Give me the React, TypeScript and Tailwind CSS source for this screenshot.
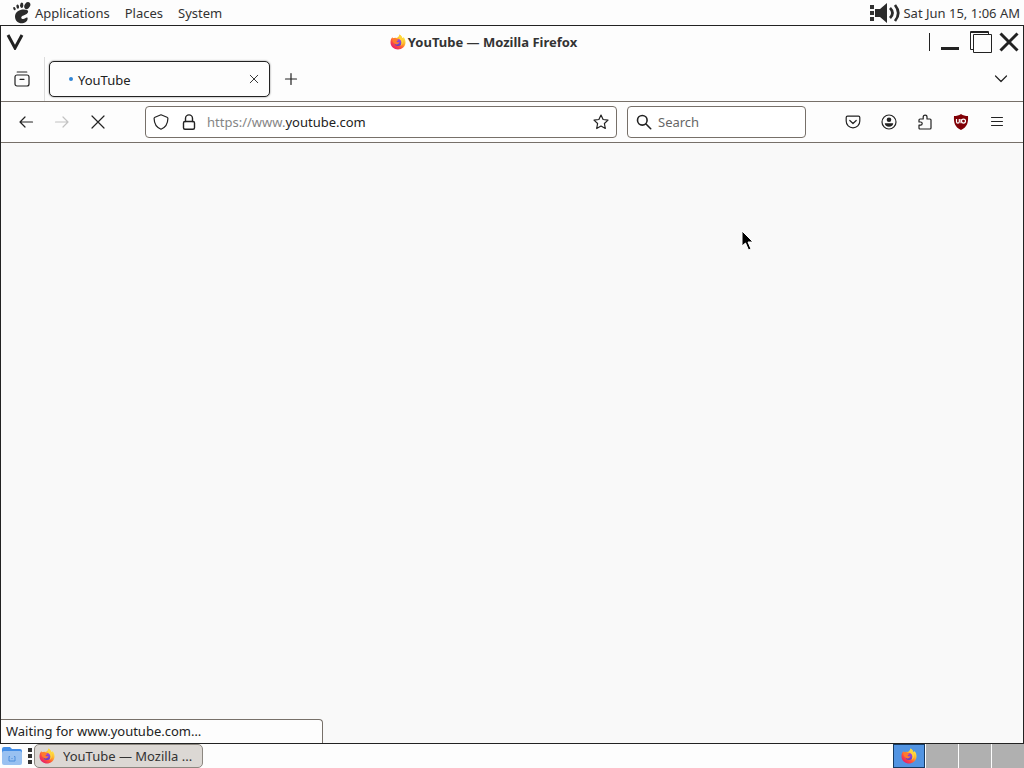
import type { ReactNode } from "react";

function Icon({ children, className = "size-4" }: { children: ReactNode; className?: string }) {
  return (
    <svg
      viewBox="0 0 16 16"
      className={`${className} shrink-0`}
      fill="none"
      stroke="currentColor"
      strokeWidth="1.2"
      strokeLinecap="round"
      strokeLinejoin="round"
      aria-hidden="true"
    >
      {children}
    </svg>
  );
}

function FirefoxLogo({ id, className }: { id: string; className: string }) {
  return (
    <svg viewBox="0 0 32 32" className={`${className} shrink-0`} aria-hidden="true">
      <defs>
        <linearGradient id={`${id}-flame`} x1="0.85" y1="0.1" x2="0.2" y2="0.9">
          <stop offset="0" stopColor="#fff04a" />
          <stop offset="0.35" stopColor="#ffb42c" />
          <stop offset="0.65" stopColor="#ff5a36" />
          <stop offset="1" stopColor="#e8206a" />
        </linearGradient>
        <linearGradient id={`${id}-globe`} x1="0.7" y1="0" x2="0.3" y2="1">
          <stop offset="0" stopColor="#a544e0" />
          <stop offset="1" stopColor="#5a3fc4" />
        </linearGradient>
      </defs>
      <path
        d="M19 1c4 2 5 5 6 7 1 0 2-1 2-2 3 3 4 7 4 11 0 8-7 14-15 14S1 25 1 17c0-4 1-8 4-11 0 1 0 2 1 3 2-1 4-2 6-1 3 0 6-3 7-7z"
        fill={`url(#${id}-flame)`}
      />
      <circle cx="16" cy="17" r="7" fill={`url(#${id}-globe)`} />
      <path d="M5 9c3-2 6-1 8 1l4 1c0 2-3 2-4 4 1 2 4 2 6 1-1 4-5 6-9 4-4-2-6-6-5-11z" fill="#ff7a2e" />
      <path d="M19 1c4 3 7 8 7 14 0 4-2 7-5 9 3-5 3-10-1-13-3-2-3-6-1-10z" fill="#ffd43b" />
    </svg>
  );
}

function GnomeFoot() {
  return (
    <svg viewBox="0 0 20 24" className="h-6 w-5 shrink-0 fill-[#2b2b2b]" aria-hidden="true">
      <ellipse cx="15.300" cy="4.600" rx="2.700" ry="3.800" transform="rotate(28 15.3 4.6)" />
      <ellipse cx="9.700" cy="4.300" rx="1.600" ry="2.700" transform="rotate(4 9.7 4.3)" />
      <ellipse cx="5.700" cy="5.600" rx="1.300" ry="2.200" transform="rotate(-10 5.7 5.6)" />
      <ellipse cx="2.400" cy="7.600" rx="1.100" ry="1.700" transform="rotate(-24 2.4 7.6)" />
      <path d="M15.500 9.300C11.500 7 3 9 3 15.500c0 4.300 3.500 7.300 7.500 6.800 3.500-.4 5.700-3.200 5-5.500-1.200-1.400-2.500 1.700-5 1.200-2-.7-1.500-3 1-3.600 3-.7 6-3.300 4-5.100z" />
    </svg>
  );
}

function Dots() {
  return (
    <span className="flex shrink-0 flex-col gap-[2px]" aria-hidden="true">
      <span className="size-1 bg-[#333]" />
      <span className="size-1 bg-[#333]" />
      <span className="size-1 bg-[#333]" />
    </span>
  );
}

function TopPanel() {
  return (
    <header className="flex h-[25px] shrink-0 items-center justify-between bg-[#fdfdfd] pr-1 pl-3 text-[#333]">
      <nav className="flex items-center gap-[15px]">
        <button type="button" className="flex items-center gap-[3px]">
          <GnomeFoot />
          Applications
        </button>
        <button type="button">Places</button>
        <button type="button">System</button>
      </nav>
      <div className="flex items-center">
        <Dots />
        <IconButton label="Volume" className="mr-[2px]">
          <svg viewBox="0 0 27 22" className="h-[22px] w-[27px]" aria-hidden="true">
            <path d="M1 7h5l7-6v20l-7-6H1z" fill="#2b2b2b" />
            <path d="M16 6q5 5 0 10M21 3q6.500 8 0 16" fill="none" stroke="#2b2b2b" strokeWidth="2.700" />
          </svg>
        </IconButton>
        <time>Sat Jun 15, 1:06 AM</time>
      </div>
    </header>
  );
}

function IconButton({ label, children, className = "" }: { label: string; children: ReactNode; className?: string }) {
  return (
    <button type="button" aria-label={label} className={`flex shrink-0 items-center justify-center ${className}`}>
      {children}
    </button>
  );
}

function TitleBar() {
  return (
    <div className="flex h-[31px] shrink-0 items-center justify-between pr-1 pl-[5px]">
      <IconButton label="Window menu" className="w-8 justify-start">
        <svg viewBox="0 0 18 16" className="h-4 w-[18px]" fill="none" stroke="#222" strokeWidth="3" aria-hidden="true">
          <path d="M2 1l7 13 7-13" />
        </svg>
      </IconButton>
      <h1 className="flex items-center gap-[2px] font-bold text-[#333]">
        <FirefoxLogo id="title" className="size-4" />
        YouTube — Mozilla Firefox
      </h1>
      <div className="flex items-center text-[#222]">
        <span className="h-[18px] w-px bg-[#222]" />
        <IconButton label="Minimize" className="ml-[11px]">
          <svg viewBox="0 0 18 22" className="h-[22px] w-[18px]" aria-hidden="true">
            <path d="M0 16h18v3H0z" fill="currentColor" />
          </svg>
        </IconButton>
        <IconButton label="Maximize" className="ml-[11px]">
          <svg viewBox="0 0 22 22" className="size-[22px]" fill="none" stroke="currentColor" aria-hidden="true">
            <path d="M.5.5h18v18H.5zM.5 1.500h18" />
            <path d="M3.500 3.500h18v18h-18z" fill="#fdfdfd" />
          </svg>
        </IconButton>
        <IconButton label="Close" className="ml-[7px]">
          <svg viewBox="0 0 20 20" className="size-5" fill="none" stroke="currentColor" strokeWidth="3" aria-hidden="true">
            <path d="M1.500 1.500l17 17M18.500 1.500l-17 17" />
          </svg>
        </IconButton>
      </div>
    </div>
  );
}

function TabStrip() {
  return (
    <div className="flex h-11 shrink-0 items-stretch text-[#222]">
      <div className="flex w-11 justify-center border-r border-[#ddd] pr-px">
        <IconButton label="Recent browsing">
          <Icon>
            <path d="M3.200 1h9.600" />
            <rect x="1" y="4" width="14" height="11" rx="2" />
            <path d="M6 8.300h4" />
          </Icon>
        </IconButton>
      </div>
      <div className="my-1 ml-1 flex h-9 w-[221px] items-center rounded-[5px] border border-[#222] bg-[#fdfdfd] pr-[7px] pl-[19px] shadow-[0_0_2px_#777]">
        <span className="mr-[5px] size-1 rounded-full bg-[#3185d5]" />
        <button type="button" className="grow pt-[2px] text-left">
          YouTube
        </button>
        <IconButton label="Close tab" className="size-4">
          <Icon className="size-3">
            <path d="M3 3l10 10M13 3L3 13" />
          </Icon>
        </IconButton>
      </div>
      <IconButton label="New tab" className="ml-[13px]">
        <Icon>
          <path d="M8 2.500v11M2.500 8h11" />
        </Icon>
      </IconButton>
      <IconButton label="List all tabs" className="mr-[14px] ml-auto">
        <Icon>
          <path d="M2.500 5l5.500 5.500L13.500 5" />
        </Icon>
      </IconButton>
    </div>
  );
}

function Toolbar() {
  return (
    <div className="flex h-[42px] shrink-0 items-center border-y border-[#777069] pl-[17px] text-[#222]">
      <div className="flex items-center gap-5">
        <IconButton label="Back">
          <Icon>
            <path d="M14.500 8H2M7 3L2 8l5 5" />
          </Icon>
        </IconButton>
        <IconButton label="Forward" className="text-[#c2c2c2]">
          <Icon>
            <path d="M1.500 8H14M9 3l5 5-5 5" />
          </Icon>
        </IconButton>
        <IconButton label="Stop">
          <Icon>
            <path d="M2 2l12 12M14 2L2 14" />
          </Icon>
        </IconButton>
      </div>
      <div className="ml-[39px] flex h-8 min-w-0 grow items-center rounded-[4px] border border-[#777069] bg-white px-[7px]">
        <IconButton label="Tracking protection" className="mr-3">
          <Icon>
            <path d="M8 .8l6 2.400c.7.300.9.700.9 1.300C14.800 9 13 13.300 8 15.200 3 13.300 1.200 9 1.100 4.500c0-.6.2-1 .9-1.300z" />
          </Icon>
        </IconButton>
        <IconButton label="Connection secure" className="mr-[10px]">
          <Icon>
            <rect x="2.500" y="7.500" width="11" height="7.700" rx="1.500" strokeWidth="1.400" />
            <path d="M4.500 7.500V4.400a3.500 3.500 0 0 1 7 0v3.100" strokeWidth="1.400" />
          </Icon>
        </IconButton>
        <label htmlFor="address" className="shrink-0 text-[#858585]">
          https://www.
        </label>
        <input id="address" type="text" defaultValue="youtube.com" className="min-w-0 grow bg-transparent outline-none" />
        <IconButton label="Bookmark this page">
          <Icon>
            <path d="M8 1l2.100 4.500 4.900.6-3.600 3.400.9 5L8 12.100l-4.300 2.400.9-5L1 6.100l4.900-.6z" />
          </Icon>
        </IconButton>
      </div>
      <div className="mr-[39px] ml-[10px] flex h-8 w-[179px] shrink-0 items-center gap-[6px] rounded-[4px] border border-[#777069] bg-white px-2">
        <Icon>
          <circle cx="6.300" cy="6.300" r="4.800" strokeWidth="1.600" />
          <path d="M10 10l4.700 4.700" strokeWidth="1.600" />
        </Icon>
        <input type="search" aria-label="Search" placeholder="Search" className="min-w-0 grow bg-transparent outline-none placeholder:text-[#666]" />
      </div>
      <div className="mr-[18px] flex shrink-0 items-center gap-5">
        <IconButton label="Save to Pocket">
          <Icon>
            <path d="M2.500 2.200h11c.8 0 1.300.5 1.300 1.300V7c0 4-3 6.800-6.800 6.800S1.200 11 1.200 7V3.500c0-.8.5-1.300 1.300-1.300z" />
            <path d="M4.800 6.500L8 9.500l3.200-3" />
          </Icon>
        </IconButton>
        <IconButton label="Account">
          <Icon>
            <circle cx="8" cy="8" r="7" />
            <circle cx="8" cy="5.800" r="2.300" fill="currentColor" stroke="none" />
            <path d="M3.800 9.300h8.400c0 2-1.800 3.500-4.200 3.500s-4.200-1.500-4.200-3.500z" fill="currentColor" stroke="none" />
          </Icon>
        </IconButton>
        <IconButton label="Extensions">
          <Icon>
            <path d="M2 7V6c0-.6.4-1 1-1h3.200V3a1.900 1.900 0 0 1 3.800 0v2h3c.6 0 1 .4 1 1v8c0 .6-.4 1-1 1H3c-.6 0-1-.4-1-1v-2.800h1.600a1.500 1.500 0 0 0 0-3.200H2z" />
          </Icon>
        </IconButton>
        <IconButton label="uBlock Origin">
          <svg viewBox="0 0 16 16" className="size-4" aria-hidden="true">
            <path d="M8 0c2 1.500 4.500 2 7 2 .4 6-.5 11-7 14C1.500 13 .6 8 1 2c2.500 0 5-.5 7-2z" fill="#800006" />
            <path d="M3.500 5v2.800q0 1.400 1.400 1.400t1.400-1.400V5M8 5v4.200" fill="none" stroke="#fff" strokeWidth="1.200" />
            <circle cx="10.500" cy="7.100" r="2" fill="none" stroke="#fff" strokeWidth="1.200" />
          </svg>
        </IconButton>
        <IconButton label="Open application menu">
          <Icon>
            <path d="M2.500 3.500h11M2.500 7.500h11M2.500 11.500h11" strokeWidth="1" />
          </Icon>
        </IconButton>
      </div>
    </div>
  );
}

function Taskbar() {
  return (
    <footer className="flex h-6 shrink-0 items-stretch bg-[#fdfdfd]">
      <IconButton label="Files" className="mx-[2px]">
        <svg viewBox="0 0 20 20" className="size-5" aria-hidden="true">
          <path d="M0 3q0-2 2-2h6l2 2h8q2 0 2 2v4H0z" fill="#438de6" />
          <rect y="5" width="20" height="14" rx="2" fill="#99c1f1" />
          <path d="M8 10.500H7V15h6v-4.500h-1M9.500 12.500h1" fill="none" stroke="#4f8fdc" />
        </svg>
      </IconButton>
      <div className="mr-[2px] ml-1 flex items-center">
        <Dots />
      </div>
      <button type="button" className="flex w-[169px] items-center gap-2 rounded-[5px] border border-[#8c8780] bg-[#dcd8d4] px-1 text-[#333]">
        <FirefoxLogo id="task" className="size-4" />
        <span className="truncate">YouTube — Mozilla ...</span>
      </button>
      <div className="ml-auto flex gap-px">
        <button type="button" aria-label="Workspace 1" className="flex w-8 items-center justify-center border border-[#163b63] bg-[#5294e2]">
          <FirefoxLogo id="workspace" className="size-4" />
        </button>
        <button type="button" aria-label="Workspace 2" className="w-8 bg-[#b0b0b0]" />
        <button type="button" aria-label="Workspace 3" className="w-8 bg-[#b0b0b0]" />
        <button type="button" aria-label="Workspace 4" className="w-8 bg-[#b0b0b0]" />
      </div>
    </footer>
  );
}

export default function App() {
  return (
    <div className="flex h-screen flex-col overflow-hidden bg-[#fdfdfd] font-['Noto_Sans',sans-serif] text-[13px] leading-5 text-[#222]">
      <TopPanel />
      <section aria-label="YouTube — Mozilla Firefox" className="flex min-h-0 grow flex-col border border-[#222]">
        <TitleBar />
        <TabStrip />
        <Toolbar />
        <main className="relative min-h-0 grow bg-[#f9f9f9]">
          <svg viewBox="0 0 14 22" className="absolute top-[87px] left-[740px] h-[22px] w-[14px]" aria-hidden="true">
            <path d="M1 1v15l3.500-3 3 7 2.500-1-3-7h5z" fill="#000" stroke="#fff" />
          </svg>
          <p role="status" className="absolute bottom-0 left-0 h-6 w-[322px] rounded-tr-[4px] border-t border-r border-[#777069] bg-[#fdfdfd] pt-px pl-[5px]">
            Waiting for www.youtube.com…
          </p>
        </main>
      </section>
      <Taskbar />
    </div>
  );
}
